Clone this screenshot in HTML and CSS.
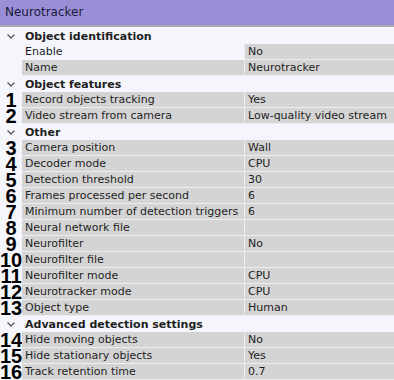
FILE: index.html
```html
<!DOCTYPE html>
<html lang="en">
<head>
  <meta charset="UTF-8">
  <title>Neurotracker</title>
<link rel="stylesheet" href="styles.css">
</head>
<body>

<div class="panel">
  <div class="panel_title">Neurotracker</div>
  <div class="grid">
    <div class="group"><svg class="chev" width="8" height="5" viewBox="0 0 8 5"><polyline points="0.5,0.5 4,4 7.5,0.5"/></svg>Object identification</div>
    <div class="row row-plain"><span class="num"></span><span class="key">Enable</span><span class="val">No</span></div>
    <div class="row"><span class="num"></span><span class="key">Name</span><span class="val">Neurotracker</span></div>

    <div class="group"><svg class="chev" width="8" height="5" viewBox="0 0 8 5"><polyline points="0.5,0.5 4,4 7.5,0.5"/></svg>Object features</div>
    <div class="row"><span class="num">1</span><span class="key">Record objects tracking</span><span class="val">Yes</span></div>
    <div class="row"><span class="num">2</span><span class="key">Video stream from camera</span><span class="val">Low-quality video stream</span></div>

    <div class="group"><svg class="chev" width="8" height="5" viewBox="0 0 8 5"><polyline points="0.5,0.5 4,4 7.5,0.5"/></svg>Other</div>
    <div class="row"><span class="num">3</span><span class="key">Camera position</span><span class="val">Wall</span></div>
    <div class="row"><span class="num">4</span><span class="key">Decoder mode</span><span class="val">CPU</span></div>
    <div class="row"><span class="num">5</span><span class="key">Detection threshold</span><span class="val">30</span></div>
    <div class="row"><span class="num">6</span><span class="key">Frames processed per second</span><span class="val">6</span></div>
    <div class="row"><span class="num">7</span><span class="key">Minimum number of detection triggers</span><span class="val">6</span></div>
    <div class="row"><span class="num">8</span><span class="key">Neural network file</span><span class="val"></span></div>
    <div class="row"><span class="num">9</span><span class="key">Neurofilter</span><span class="val">No</span></div>
    <div class="row"><span class="num">10</span><span class="key">Neurofilter file</span><span class="val"></span></div>
    <div class="row"><span class="num">11</span><span class="key">Neurofilter mode</span><span class="val">CPU</span></div>
    <div class="row"><span class="num">12</span><span class="key">Neurotracker mode</span><span class="val">CPU</span></div>
    <div class="row"><span class="num">13</span><span class="key">Object type</span><span class="val">Human</span></div>

    <div class="group"><svg class="chev" width="8" height="5" viewBox="0 0 8 5"><polyline points="0.5,0.5 4,4 7.5,0.5"/></svg>Advanced detection settings</div>
    <div class="row"><span class="num">14</span><span class="key">Hide moving objects</span><span class="val">No</span></div>
    <div class="row"><span class="num">15</span><span class="key">Hide stationary objects</span><span class="val">Yes</span></div>
    <div class="row"><span class="num">16</span><span class="key">Track retention time</span><span class="val">0.7</span></div>
  </div>
</div>

</body>
</html>
```

FILE: styles.css
```css
body {
  margin: 0;
  background-color: #f4f6fb;
  font-family: "DejaVu Sans", Verdana, sans-serif;
  font-size: 11px;
  color: #1e1e1e;
}
.panel {
  width: 394px;
  height: 380px;
  overflow: hidden;
}
.panel_title {
  height: 25px;
  line-height: 24px;
  padding-left: 5px;
  background-color: #9a8fd6;
  color: #1c1a3c;
  font-size: 12px;
  border-bottom: 2px solid #a9a9b4;
}
.grid {
  padding-top: 1px;
}
.group {
  display: flex;
  align-items: center;
  height: 16px;
  font-weight: bold;
}
.chev {
  margin: 0 10px 0 7px;
  fill: none;
  stroke: #5a5a66;
  stroke-width: 1.3;
}
.row {
  display: grid;
  grid-template-columns: 22px 222px 150px;
  height: 16px;
}
.num {
  font-family: "Liberation Sans", Arial, sans-serif;
  font-weight: bold;
  font-size: 20px;
  line-height: 16px;
  text-align: center;
  color: #000;
  white-space: nowrap;
}
.key,
.val {
  height: 15px;
  line-height: 15px;
  background-color: #d4d4d4;
  border-bottom: 1px solid #eeeeee;
  white-space: nowrap;
  overflow: hidden;
}
.key {
  padding-left: 3px;
}
.val {
  padding-left: 3px;
  border-left: 1px solid #eeeeee;
}
.row-plain .key {
  background-color: transparent;
  border-bottom-color: transparent;
}
```
